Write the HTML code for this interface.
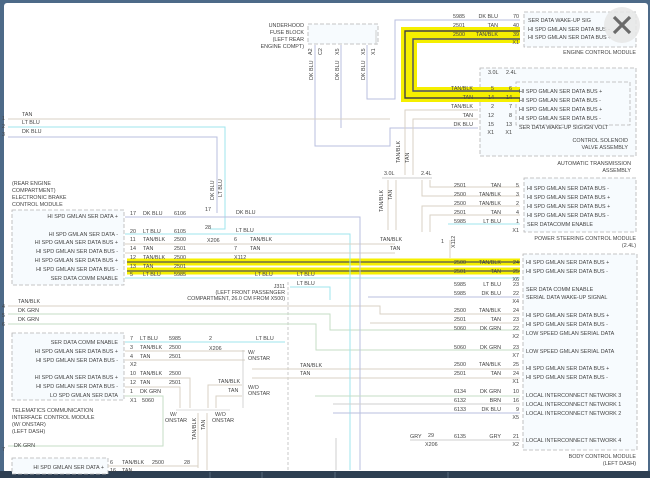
<!DOCTYPE html>
<html><head><meta charset="utf-8"><style>
html,body{margin:0;padding:0;background:#4d6a88;}
svg{display:block}
text{font-family:"Liberation Sans",sans-serif;font-size:5.4px;fill:#444}
.r{text-anchor:end}
.w{fill:none;stroke-width:1}
.tan{stroke:#d9d2c4}.lb{stroke:#9fe6ee}.db{stroke:#b9bfdf}.dg{stroke:#c6dec6}.gy{stroke:#cfcfcf}
.box{fill:#f7fbfe;stroke:#b4b4b4;stroke-dasharray:4 2;stroke-width:0.8}
</style></head><body>
<svg width="650" height="478" viewBox="0 0 650 478" xmlns="http://www.w3.org/2000/svg">
<rect x="0" y="0" width="650" height="478" fill="#4d6a88"/>
<rect x="4" y="3" width="644" height="470" rx="3" fill="#ffffff"/>
<rect x="0" y="471" width="650" height="7" fill="#2e3f52"/>

<!-- boxes first -->
<rect x="308" y="24" width="70" height="20" class="box"/>
<rect x="524" y="12" width="112" height="35" class="box"/>
<rect x="480" y="68" width="156" height="88" class="box"/>
<rect x="516" y="82" width="114" height="43" class="box"/>
<rect x="524" y="178" width="112" height="54" class="box"/>
<rect x="12" y="210" width="112" height="75" class="box"/>
<rect x="12" y="333" width="112" height="67" class="box"/>
<rect x="12" y="458" width="96" height="16" class="box"/>
<rect x="523" y="254" width="114" height="196" class="box"/>

<!-- yellow highlights (under text) -->
<path d="M520,31H405V98H520" fill="none" stroke="#f5ef00" stroke-width="8"/>
<path d="M520,39H413V91H520" fill="none" stroke="#f5ef00" stroke-width="8"/>
<path d="M520,31H405V98H520" fill="none" stroke="#444" stroke-width="1.4"/>
<path d="M520,39H413V91H520" fill="none" stroke="#4a4f6a" stroke-width="1.4"/>
<path d="M127,262H520M127,271H520" stroke="#f5ef00" stroke-width="7" fill="none"/>
<path d="M127,262H520M127,271H520" stroke="#555" stroke-width="1.3" fill="none"/>

<!-- fuse block -->
<text x="304" y="27" class="r">UNDERHOOD</text>
<text x="304" y="34" class="r">FUSE BLOCK</text>
<text x="304" y="41" class="r">(LEFT REAR</text>
<text x="304" y="48" class="r">ENGINE COMPT)</text>
<text transform="translate(312,55) rotate(-90)">A2</text>
<text transform="translate(322,55) rotate(-90)">C2</text>
<text transform="translate(339,55) rotate(-90)">X5</text>
<text transform="translate(365,55) rotate(-90)">X5</text>
<text transform="translate(375,55) rotate(-90)">X1</text>
<text transform="translate(313,80) rotate(-90)">DK BLU</text>
<text transform="translate(339,80) rotate(-90)">DK BLU</text>
<text transform="translate(365,80) rotate(-90)">DK BLU</text>
<path class="w db" d="M315,45V146H390V128H478"/>
<path class="w db" d="M341,45V128"/>
<path class="w db" d="M367,45V99H395V20H520"/>
<path class="w gy" d="M376,45V30"/>

<!-- ECM -->
<text x="453" y="18">5985</text><text x="498" y="18" class="r">DK BLU</text><text x="519" y="18" class="r">70</text>
<text x="453" y="27">2501</text><text x="498" y="27" class="r">TAN</text><text x="519" y="27" class="r">40</text>
<text x="453" y="36">2500</text><text x="498" y="36" class="r">TAN/BLK</text><text x="519" y="36" class="r">39</text>
<text x="519" y="44" class="r">X1</text>
<text x="528" y="22">SER DATA WAKE-UP SIG</text>
<text x="528" y="31">HI SPD GMLAN SER DATA BUS -</text>
<text x="528" y="39">HI SPD GMLAN SER DATA BUS +</text>
<text x="636" y="54" class="r">ENGINE CONTROL MODULE</text>

<!-- ATA -->
<text x="488" y="74">3.0L</text><text x="506" y="74">2.4L</text>
<text x="473" y="90" class="r">TAN/BLK</text><text x="494" y="90" class="r">5</text><text x="512" y="90" class="r">6</text>
<text x="473" y="99" class="r">TAN</text><text x="494" y="99" class="r">14</text><text x="512" y="99" class="r">14</text>
<text x="473" y="108" class="r">TAN/BLK</text><text x="494" y="108" class="r">2</text><text x="512" y="108" class="r">7</text>
<text x="473" y="117" class="r">TAN</text><text x="494" y="117" class="r">12</text><text x="512" y="117" class="r">8</text>
<text x="473" y="126" class="r">DK BLU</text><text x="494" y="126" class="r">15</text><text x="512" y="126" class="r">13</text>
<text x="494" y="134" class="r">X1</text><text x="512" y="134" class="r">X1</text>
<text x="519" y="93">HI SPD GMLAN SER DATA BUS +</text>
<text x="519" y="102">HI SPD GMLAN SER DATA BUS -</text>
<text x="519" y="111">HI SPD GMLAN SER DATA BUS +</text>
<text x="519" y="120">HI SPD GMLAN SER DATA BUS -</text>
<text x="519" y="129">SER DATA WAKE-UP SIG/IGN VOLT</text>
<text x="628" y="142" class="r">CONTROL SOLENOID</text>
<text x="628" y="149" class="r">VALVE ASSEMBLY</text>
<text x="631" y="165" class="r">AUTOMATIC TRANSMISSION</text>
<text x="631" y="172" class="r">ASSEMBLY</text>
<path class="w tan" d="M478,110H405V175"/>
<path class="w tan" d="M478,119H413V175"/>
<text transform="translate(400,163) rotate(-90)">TAN/BLK</text>
<text transform="translate(409,163) rotate(-90)">TAN</text>
<text x="384" y="175">3.0L</text><text x="421" y="175">2.4L</text>
<path d="M382,178H432" fill="none" stroke="#bbb" stroke-width="0.7"/>
<path class="w tan" d="M388,180V230"/><path class="w tan" d="M396,180V230"/>
<text transform="translate(383,212) rotate(-90)">TAN/BLK</text>
<text transform="translate(392,200) rotate(-90)">TAN</text>
<path class="w tan" d="M422,180V196H520"/><path class="w tan" d="M430,180V187H520"/>
<path class="w tan" d="M422,232V206H520"/><path class="w tan" d="M430,232V215H520"/>

<!-- PSCM -->
<text x="454" y="187">2501</text><text x="501" y="187" class="r">TAN</text><text x="519" y="187" class="r">5</text>
<text x="454" y="196">2500</text><text x="501" y="196" class="r">TAN/BLK</text><text x="519" y="196" class="r">3</text>
<text x="454" y="205">2500</text><text x="501" y="205" class="r">TAN/BLK</text><text x="519" y="205" class="r">2</text>
<text x="454" y="214">2501</text><text x="501" y="214" class="r">TAN</text><text x="519" y="214" class="r">4</text>
<text x="454" y="223">5985</text><text x="501" y="223" class="r">LT BLU</text><text x="519" y="223" class="r">1</text>
<text x="519" y="232" class="r">X1</text>
<text x="527" y="190">HI SPD GMLAN SER DATA BUS -</text>
<text x="527" y="199">HI SPD GMLAN SER DATA BUS +</text>
<text x="527" y="208">HI SPD GMLAN SER DATA BUS +</text>
<text x="527" y="217">HI SPD GMLAN SER DATA BUS -</text>
<text x="527" y="226">SER DATACOMM ENABLE</text>
<text x="636" y="240" class="r">POWER STEERING CONTROL MODULE</text>
<text x="636" y="247" class="r">(2.4L)</text>
<path class="w lb" d="M448,224H520"/>

<!-- left top wires -->
<text x="2" y="120">1</text><text x="2" y="128">2</text><text x="2" y="136">3</text>
<text x="22" y="116">TAN</text><text x="22" y="124">LT BLU</text><text x="22" y="133">DK BLU</text>
<path class="w tan" d="M8,119H390"/>
<path class="w lb" d="M8,127H225V229H210"/>
<path class="w db" d="M8,137H217V213"/>
<text transform="translate(214,200) rotate(-90)">DK BLU</text>
<text transform="translate(222,197) rotate(-90)">LT BLU</text>

<!-- EBCM -->
<text x="12" y="185">(REAR ENGINE</text>
<text x="12" y="192">COMPARTMENT)</text>
<text x="12" y="199">ELECTRONIC BRAKE</text>
<text x="12" y="206">CONTROL MODULE</text>
<text x="118" y="218" class="r">HI SPD GMLAN SER DATA +</text>
<text x="118" y="236" class="r">HI SPD GMLAN SER DATA -</text>
<text x="118" y="244" class="r">HI SPD GMLAN SER DATA BUS +</text>
<text x="118" y="253" class="r">HI SPD GMLAN SER DATA BUS -</text>
<text x="118" y="262" class="r">HI SPD GMLAN SER DATA BUS +</text>
<text x="118" y="271" class="r">HI SPD GMLAN SER DATA BUS -</text>
<text x="118" y="280" class="r">SER DATA COMM ENABLE</text>
<text x="130" y="215">17</text><text x="143" y="215">DK BLU</text><text x="174" y="215">6106</text>
<text x="130" y="233">20</text><text x="143" y="233">LT BLU</text><text x="174" y="233">6105</text>
<text x="130" y="241">11</text><text x="143" y="241">TAN/BLK</text><text x="174" y="241">2500</text>
<text x="130" y="250">14</text><text x="143" y="250">TAN</text><text x="174" y="250">2501</text>
<text x="130" y="259">12</text><text x="143" y="259">TAN/BLK</text><text x="174" y="259">2500</text>
<text x="130" y="268">13</text><text x="143" y="268">TAN</text><text x="174" y="268">2501</text>
<text x="130" y="276">5</text><text x="143" y="276">LT BLU</text><text x="174" y="276">5985</text>
<text x="205" y="211">17</text><text x="205" y="229">28</text>
<text x="207" y="242">X206</text>
<text x="236" y="214">DK BLU</text><text x="236" y="232">LT BLU</text>
<text x="234" y="241">6</text><text x="250" y="241">TAN/BLK</text>
<text x="234" y="250">7</text><text x="250" y="250">TAN</text>
<text x="234" y="259">X112</text>
<path class="w db" d="M125,217H360V400"/>
<path class="w lb" d="M125,234H350V370"/>
<path class="w tan" d="M125,244H395"/>
<path class="w tan" d="M125,253H395"/>
<path class="w lb" d="M125,278H520"/>
<text x="255" y="276">LT BLU</text>
<text x="297" y="276">LT BLU</text><text x="297" y="285">LT BLU</text>
<path class="w lb" d="M290,287H330V300"/>
<text x="380" y="241">TAN/BLK</text><text x="390" y="250">TAN</text>
<text x="441" y="243">1</text>
<text transform="translate(455,248) rotate(-90)">X112</text>
<path class="w tan" d="M450,240V258"/>

<!-- J311 -->
<text x="285" y="288" class="r">J311</text>
<text x="285" y="294" class="r">(LEFT FRONT PASSENGER</text>
<text x="285" y="300" class="r">COMPARTMENT, 26.0 CM FROM X500)</text>
<path d="M288,282V470" stroke="#bbb" stroke-dasharray="3 2" stroke-width="0.8"/>

<!-- left mid wires -->
<text x="2" y="308">4</text><text x="2" y="317">5</text><text x="2" y="326">6</text>
<text x="18" y="303">TAN/BLK</text><text x="18" y="312">DK GRN</text><text x="18" y="321">DK GRN</text>
<path class="w tan" d="M8,306H380V314H520"/>
<path class="w dg" d="M8,314H330V330H520"/>
<path class="w dg" d="M8,324H316V350H520"/>
<path class="w tan" d="M370,323H520"/>

<!-- Telematics -->
<text x="118" y="344" class="r">SER DATA COMM ENABLE</text>
<text x="118" y="353" class="r">HI SPD GMLAN SER DATA BUS +</text>
<text x="118" y="362" class="r">HI SPD GMLAN SER DATA BUS -</text>
<text x="118" y="379" class="r">HI SPD GMLAN SER DATA BUS +</text>
<text x="118" y="388" class="r">HI SPD GMLAN SER DATA BUS -</text>
<text x="118" y="397" class="r">LO SPD GMLAN SER DATA</text>
<text x="130" y="340">7</text><text x="140" y="340">LT BLU</text><text x="169" y="340">5985</text>
<text x="130" y="349">3</text><text x="140" y="349">TAN/BLK</text><text x="169" y="349">2500</text>
<text x="130" y="358">4</text><text x="140" y="358">TAN</text><text x="169" y="358">2501</text>
<text x="130" y="366">X2</text>
<text x="130" y="375">10</text><text x="140" y="375">TAN/BLK</text><text x="169" y="375">2500</text>
<text x="130" y="384">12</text><text x="140" y="384">TAN</text><text x="169" y="384">2501</text>
<text x="130" y="393">1</text><text x="140" y="393">DK GRN</text>
<text x="130" y="402">X1</text><text x="142" y="402">5060</text>
<text x="209" y="340">2</text><text x="209" y="350">X206</text>
<text x="256" y="340">LT BLU</text>
<path class="w lb" d="M125,342H285"/>
<path class="w tan" d="M125,351H245"/><path class="w tan" d="M125,360H245"/>
<text x="248" y="354">W/</text><text x="248" y="360">ONSTAR</text>
<text x="248" y="389">W/O</text><text x="248" y="395">ONSTAR</text>
<text x="218" y="383">TAN/BLK</text><text x="228" y="392">TAN</text>
<path d="M243,350V408" stroke="#bbb" stroke-width="0.6" fill="none"/>
<path class="w tan" d="M252,369H520M252,378H520"/>
<text x="300" y="367">TAN/BLK</text><text x="300" y="375">TAN</text>
<path class="w tan" d="M125,378H190V408"/><path class="w tan" d="M125,387H180V408"/>
<path class="w tan" d="M242,385H208V408"/><path class="w tan" d="M242,396H216V408"/>
<path class="w dg" d="M125,396H163V446H8"/>
<path d="M176,410H230" stroke="#bbb" stroke-width="0.6" fill="none"/>
<text x="170" y="416">W/</text><text x="165" y="422">ONSTAR</text>
<text x="215" y="416">W/O</text><text x="212" y="422">ONSTAR</text>
<path class="w tan" d="M198,413V468"/><path class="w tan" d="M207,413V470"/>
<text transform="translate(196,440) rotate(-90)">TAN/BLK</text>
<text transform="translate(205,430) rotate(-90)">TAN</text>
<text x="12" y="412">TELEMATICS COMMUNICATION</text>
<text x="12" y="419">INTERFACE CONTROL MODULE</text>
<text x="12" y="426">(W/ ONSTAR)</text>
<text x="12" y="433">(LEFT DASH)</text>
<text x="14" y="447">DK GRN</text><text x="2" y="451">7</text>
<text x="104" y="469" class="r">HI SPD GMLAN SER DATA +</text>
<text x="110" y="464">6</text><text x="122" y="464">TAN/BLK</text><text x="152" y="464">2500</text><text x="184" y="464">28</text>
<text x="110" y="472">16</text><text x="122" y="472">TAN</text>
<path class="w tan" d="M108,466H198"/>

<!-- vertical lines near BCM -->
<path class="w lb" d="M350,278V470"/>
<path class="w db" d="M360,217V470"/>
<path class="w dg" d="M315,396H520"/><path class="w gy" d="M333,404H520"/>
<path class="w db" d="M333,413H520"/>
<path class="w gy" d="M336,438V470"/><path class="w gy" d="M410,440H520"/>

<!-- BCM -->
<text x="454" y="264">2500</text><text x="501" y="264" class="r">TAN/BLK</text><text x="519" y="264" class="r">24</text>
<text x="454" y="273">2501</text><text x="501" y="273" class="r">TAN</text><text x="519" y="273" class="r">25</text>
<text x="519" y="281" class="r">X6</text>
<text x="454" y="286">5985</text><text x="501" y="286" class="r">LT BLU</text><text x="519" y="286" class="r">23</text>
<text x="454" y="295">5985</text><text x="501" y="295" class="r">DK BLU</text><text x="519" y="295" class="r">22</text>
<text x="519" y="303" class="r">X4</text>
<text x="454" y="312">2500</text><text x="501" y="312" class="r">TAN/BLK</text><text x="519" y="312" class="r">24</text>
<text x="454" y="321">2501</text><text x="501" y="321" class="r">TAN</text><text x="519" y="321" class="r">23</text>
<text x="454" y="330">5060</text><text x="501" y="330" class="r">DK GRN</text><text x="519" y="330" class="r">22</text>
<text x="519" y="338" class="r">X2</text>
<text x="454" y="349">5060</text><text x="501" y="349" class="r">DK GRN</text><text x="519" y="349" class="r">23</text>
<text x="519" y="357" class="r">X7</text>
<text x="454" y="366">2500</text><text x="501" y="366" class="r">TAN/BLK</text><text x="519" y="366" class="r">25</text>
<text x="454" y="375">2501</text><text x="501" y="375" class="r">TAN</text><text x="519" y="375" class="r">24</text>
<text x="519" y="383" class="r">X1</text>
<text x="454" y="393">6134</text><text x="501" y="393" class="r">DK GRN</text><text x="519" y="393" class="r">10</text>
<text x="454" y="402">6132</text><text x="501" y="402" class="r">BRN</text><text x="519" y="402" class="r">16</text>
<text x="454" y="411">6133</text><text x="501" y="411" class="r">DK BLU</text><text x="519" y="411" class="r">9</text>
<text x="519" y="419" class="r">X5</text>
<text x="410" y="438">GRY</text><text x="428" y="437">29</text><text x="454" y="438">6135</text><text x="501" y="438" class="r">GRY</text><text x="519" y="438" class="r">21</text>
<text x="425" y="446">X206</text><text x="519" y="446" class="r">X2</text>
<text x="526" y="264">HI SPD GMLAN SER DATA BUS +</text>
<text x="526" y="273">HI SPD GMLAN SER DATA BUS -</text>
<text x="526" y="291">SER DATA COMM ENABLE</text>
<text x="526" y="299">SERIAL DATA WAKE-UP SIGNAL</text>
<text x="526" y="317">HI SPD GMLAN SER DATA BUS +</text>
<text x="526" y="326">HI SPD GMLAN SER DATA BUS -</text>
<text x="526" y="335">LOW SPEED GMLAN SERIAL DATA</text>
<text x="526" y="353">LOW SPEED GMLAN SERIAL DATA</text>
<text x="526" y="370">HI SPD GMLAN SER DATA BUS +</text>
<text x="526" y="379">HI SPD GMLAN SER DATA BUS -</text>
<text x="526" y="397">LOCAL INTERCONNECT NETWORK 3</text>
<text x="526" y="406">LOCAL INTERCONNECT NETWORK 1</text>
<text x="526" y="415">LOCAL INTERCONNECT NETWORK 2</text>
<text x="526" y="442">LOCAL INTERCONNECT NETWORK 4</text>
<text x="636" y="458" class="r">BODY CONTROL MODULE</text>
<text x="636" y="465" class="r">(LEFT DASH)</text>
<path class="w db" d="M368,297H520"/>

<!-- close button -->
<circle cx="622" cy="25" r="18" fill="#e6e6e6" fill-opacity="0.85"/>
<path d="M614,17L630,33M630,17L614,33" stroke="#6b6b6b" stroke-width="3.2"/>

<path d="M210,472V478M262,472V478M335,472V478M448,472V478" stroke="#55687c" stroke-width="1"/>
</svg>
</body></html>
